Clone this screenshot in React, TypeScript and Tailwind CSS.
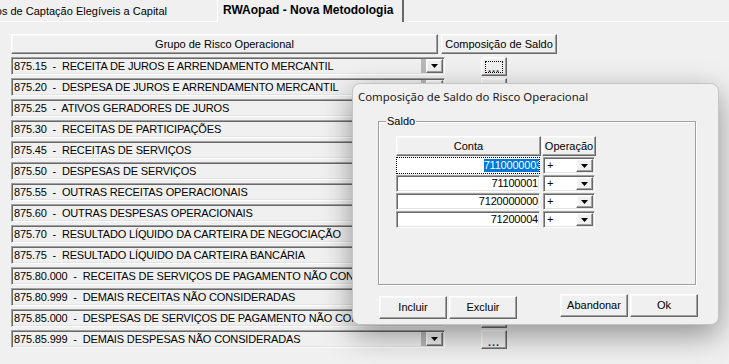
import React from 'react';

const raised =
  'bg-[#f0f0f0] border border-t-white border-l-white border-r-[#696969] border-b-[#696969] shadow-[inset_-1px_-1px_0_#a0a0a0,inset_1px_1px_0_#f8f8f8]';
const sunken =
  'border border-t-[#a0a0a0] border-l-[#a0a0a0] border-b-white border-r-white shadow-[inset_1px_1px_0_#696969,inset_-1px_-1px_0_#e3e3e3]';

const grupos = [
  '875.15  -  RECEITA DE JUROS E ARRENDAMENTO MERCANTIL',
  '875.20  -  DESPESA DE JUROS E ARRENDAMENTO MERCANTIL',
  '875.25  -  ATIVOS GERADORES DE JUROS',
  '875.30  -  RECEITAS DE PARTICIPAÇÕES',
  '875.45  -  RECEITAS DE SERVIÇOS',
  '875.50  -  DESPESAS DE SERVIÇOS',
  '875.55  -  OUTRAS RECEITAS OPERACIONAIS',
  '875.60  -  OUTRAS DESPESAS OPERACIONAIS',
  '875.70  -  RESULTADO LÍQUIDO DA CARTEIRA DE NEGOCIAÇÃO',
  '875.75  -  RESULTADO LÍQUIDO DA CARTEIRA BANCÁRIA',
  '875.80.000  -  RECEITAS DE SERVIÇOS DE PAGAMENTO NÃO CONSIDERADAS',
  '875.80.999  -  DEMAIS RECEITAS NÃO CONSIDERADAS',
  '875.85.000  -  DESPESAS DE SERVIÇOS DE PAGAMENTO NÃO CONSIDERADAS',
  '875.85.999  -  DEMAIS DESPESAS NÃO CONSIDERADAS',
];

const contas = ['7110000003', '71100001', '7120000000', '71200004'];

function Arrow() {
  return (
    <svg width="7" height="4" viewBox="0 0 7 4">
      <polygon points="0,0 7,0 3.5,4" fill="#000" />
    </svg>
  );
}

function DropButton({ w = 17, h = 14 }: { w?: number; h?: number }) {
  return (
    <div className={`${raised} flex items-center justify-center shrink-0`} style={{ width: w, height: h }}>
      <Arrow />
    </div>
  );
}

function GrupoRow({ label, focused }: { label: string; focused?: boolean }) {
  return (
    <div className="flex items-start h-[21px]">
      <div className={`${sunken} w-[434px] h-[18px] flex items-center bg-[#f0f0f0]`}>
        <span className="flex-1 pl-[2px] whitespace-pre overflow-hidden tracking-[-0.15px]">{label}</span>
        <div className="w-[5px] h-[14px] bg-[#b9b9b9]" />
        <DropButton w={17} h={14} />
        <div className="w-[1px]" />
      </div>
      <div className={`${raised} ml-[36px] w-[26px] h-[19px] flex items-center justify-center`}>
        <div
          className={`w-[18px] h-[12px] flex items-end justify-center pb-[1px] ${
            focused ? 'border border-dotted border-black' : ''
          }`}
        >
          <span className="text-[11px] font-bold leading-[6px] tracking-[1px] text-[#1a2a5a]">...</span>
        </div>
      </div>
    </div>
  );
}

function Dialog() {
  return (
    <div className="absolute left-[352px] top-[83px] w-[367px] h-[242px] bg-[#f0f0f0] rounded-[8px] border border-[#c4c4c4] shadow-[0_10px_30px_rgba(0,0,0,0.4)] flex flex-col">
      <div className="h-[25px] pl-[5px] pt-[5px] font-['Noto_Sans',sans-serif] text-[11.4px] text-[#1b1b1b] leading-[16px]">
        Composição de Saldo do Risco Operacional
      </div>

      <div className="relative ml-[25px] mt-[12px] w-[318px] h-[164px] border border-[#a0a0a0] shadow-[1px_1px_0_white,inset_1px_1px_0_white]">
        <span className="absolute -top-[8px] left-[7px] px-[1px] bg-[#f0f0f0] leading-[14px]">Saldo</span>
        <div className="ml-[17px] mt-[14px] flex flex-col">
          <div className="flex gap-[1px] h-[20px]">
            <div className={`${raised} w-[145px] flex items-center justify-center`}>Conta</div>
            <div className={`${raised} w-[54px] flex items-center justify-center`}>Operação</div>
          </div>
          <div className="flex flex-col gap-[1px] mt-[1px]">
            {contas.map((c, i) => (
              <div key={c} className="flex gap-[3px] h-[17px]">
                <div
                  className={`w-[144px] h-[17px] bg-white flex items-center justify-end overflow-hidden ${
                    i === 0 ? 'border border-dotted border-black' : sunken
                  }`}
                >
                  {i === 0 ? (
                    <span className="bg-[#0078d7] text-white leading-[13px] -mr-[3px] tracking-[-0.2px]">{c}</span>
                  ) : (
                    <span className="pr-[1px] tracking-[-0.2px]">{c}</span>
                  )}
                </div>
                <div className={`${sunken} w-[52px] h-[17px] bg-white flex items-center pl-[3px] pr-[1px]`}>
                  <span className="flex-1">+</span>
                  <DropButton w={17} h={13} />
                </div>
              </div>
            ))}
          </div>
        </div>
      </div>

      <div className="flex items-start ml-[26px] mt-[9px]">
        <button className={`${raised} w-[68px] h-[23px] mt-[2px]`}>Incluir</button>
        <button className={`${raised} w-[68px] h-[23px] mt-[2px] ml-[2px]`}>Excluir</button>
        <button className={`${raised} w-[68px] h-[23px] ml-[43px]`}>Abandonar</button>
        <button className={`${raised} w-[68px] h-[23px] ml-[2px]`}>Ok</button>
      </div>
    </div>
  );
}

export default function App() {
  return (
    <div className="relative w-[729px] h-[364px] overflow-hidden bg-[#f0f0f0] text-black text-[11px] font-['Liberation_Sans',Arial,sans-serif]">
      {/* tabs */}
      <div className="flex h-[22px]">
        <div className="w-[217px] h-[20px] mt-[2px] border-b border-white flex justify-end items-center pr-[50px] overflow-hidden whitespace-nowrap text-[11px]">
          Instrumentos de Captação Elegíveis a Capital
        </div>
        <div className="w-[187px] h-[22px] border-l border-white border-r-2 border-r-[#696969] pl-[5px] pb-[3px] flex items-center font-bold text-[12px]">
          RWAopad - Nova Metodologia
        </div>
        <div className="flex-1 h-[22px] border-b border-white" />
      </div>

      <div className="pl-[11px] pt-[12px]">
        <div className="flex gap-[3px] h-[21px] mb-[2px]">
          <div className={`${raised} w-[427px] h-[20px] flex items-center justify-center`}>Grupo de Risco Operacional</div>
          <div className={`${raised} w-[116px] h-[20px] flex items-center justify-center`}>Composição de Saldo</div>
        </div>
        {grupos.map((g, i) => (
          <GrupoRow key={g} label={g} focused={i === 0} />
        ))}
      </div>

      <Dialog />
    </div>
  );
}
